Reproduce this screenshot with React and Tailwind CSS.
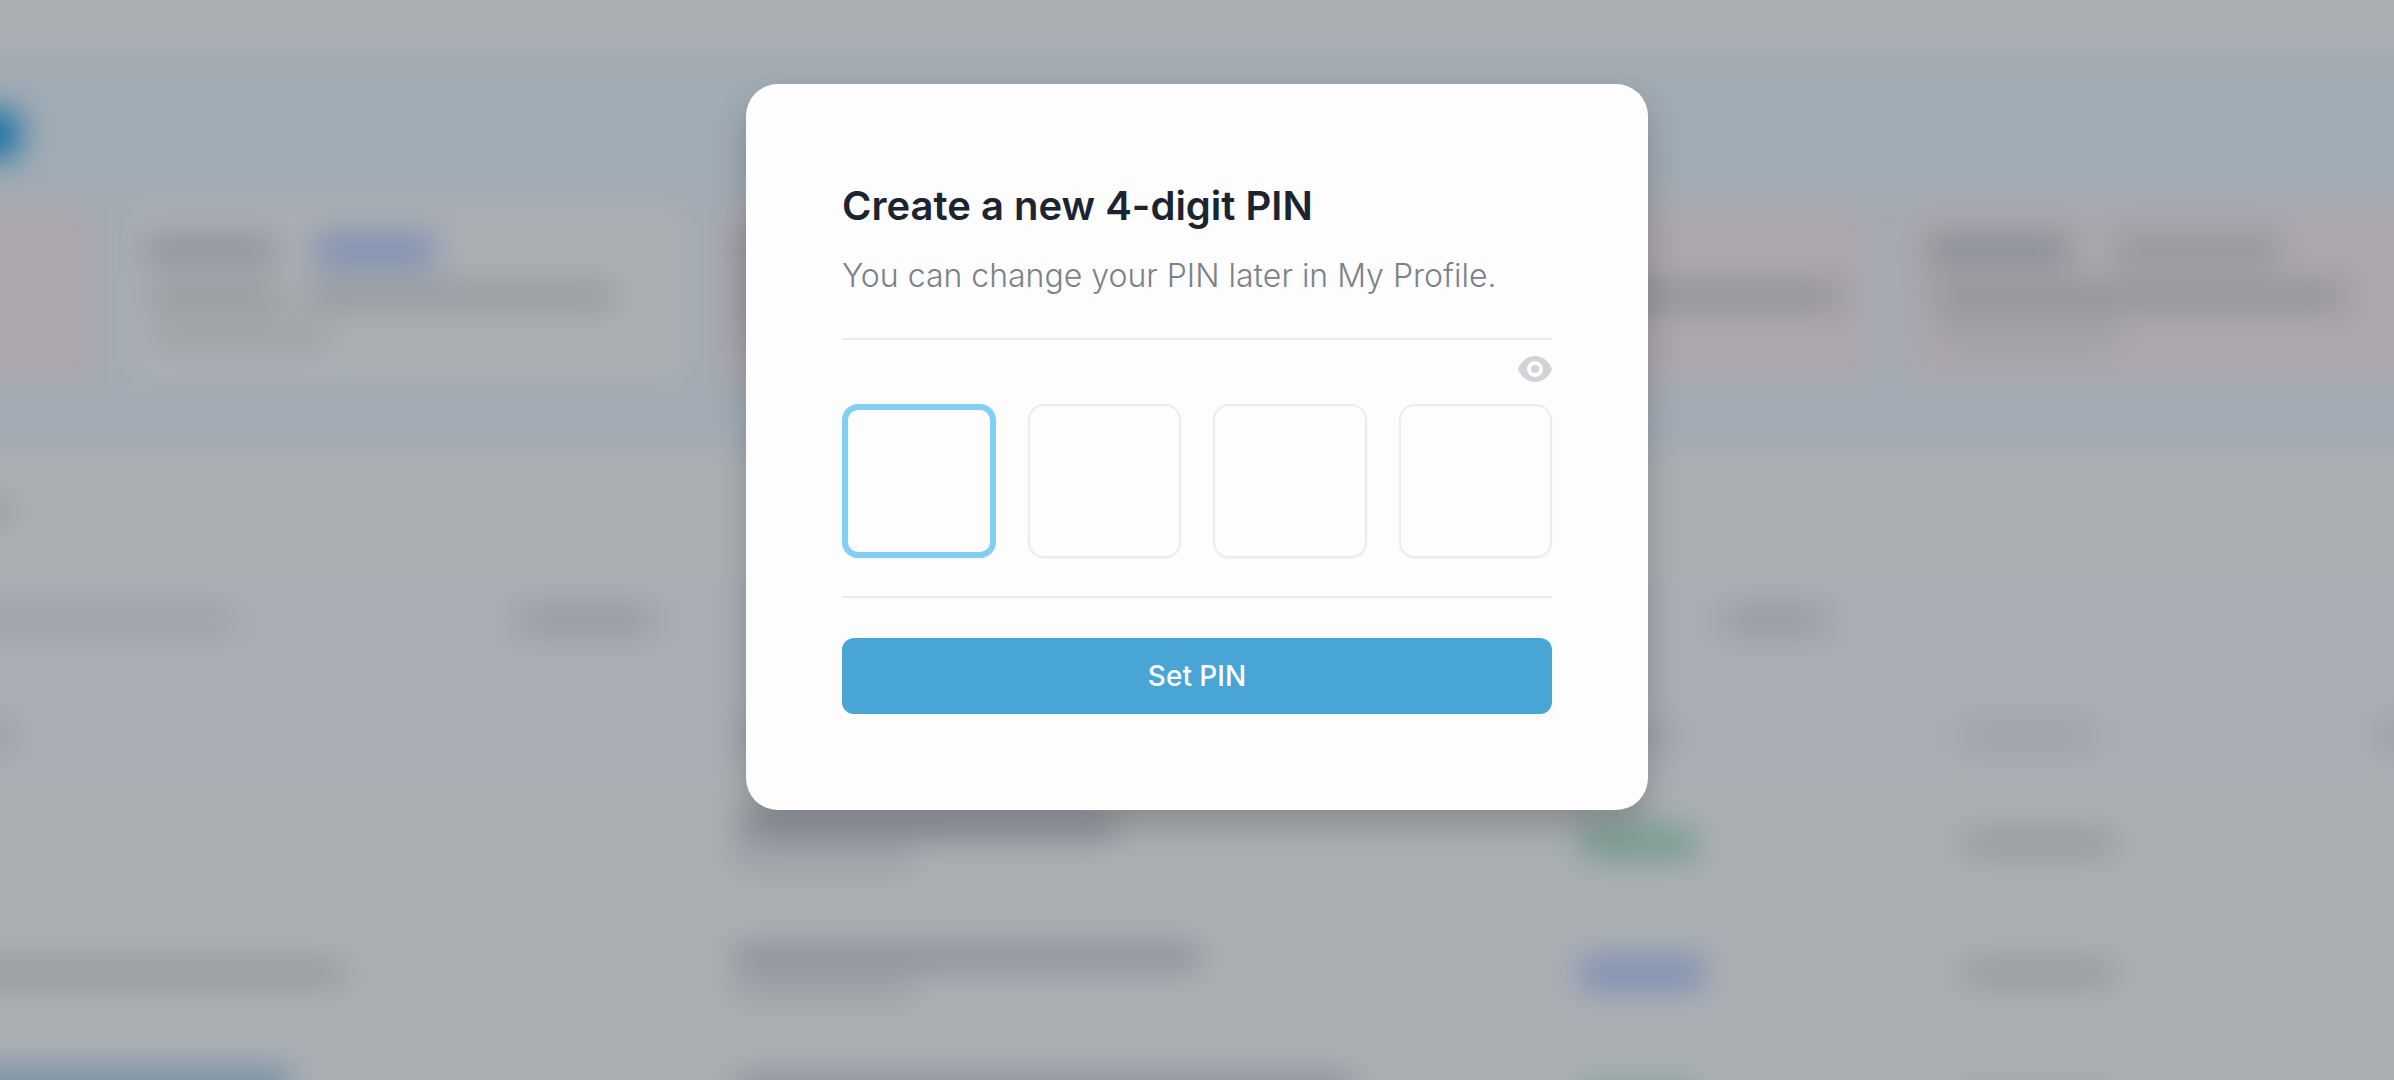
import React, { useRef, useState } from 'react';

const tones = {
    dark: 'bg-[#80878e]',
    mid: 'bg-[#8d9398]',
    soft: 'bg-[#979da2]',
    faint: 'bg-[#9c9ba0]',
    blue: 'bg-[#7d8db3]',
    green: 'bg-[#749a8d]',
    link: 'bg-[#63849f]',
    rose: 'bg-[#8b8a8f]',
};

const Bar = ({ tone = 'mid', size = 'h-5', className = '' }) => (
    <div className={`shrink-0 rounded ${size} ${tones[tone]} ${className}`}></div>
);

const Card = ({ className = '', children }) => (
    <div className={`h-[184px] shrink-0 rounded-xl px-5 pt-8 ${className}`}>{children}</div>
);

const Row = ({ name, title, sub, pill }) => (
    <div className="grid h-[130px] grid-cols-[30%_36%_16%_18%] items-center px-12">
        <div>{name}</div>
        <div className="space-y-3 pl-4">
            <Bar tone="dark" className={title} />
            <Bar tone="soft" className={sub} />
        </div>
        <div>{pill}</div>
        <div><Bar className="w-[150px]" /></div>
    </div>
);

// Dashboard that stays behind the dialog. It runs 48px past the window
// on every side so that the blur has no hard edge.
const Dashboard = () => (
    <div aria-hidden="true" className="absolute -inset-12 overflow-hidden bg-[#aaafb3] pt-12 blur-lg">
        <div className="h-[58px]"></div>
        <div className="h-[388px] bg-[#a1abb4]">
            <div className="h-[144px] pt-[52px]">
                <div className="h-12 w-[68px] rounded-r-xl bg-[#1670a3]"></div>
            </div>
            <div className="flex gap-[27px]">
                <Card className="w-[146px] rounded-l-none bg-[#aba7ad]" />
                <Card className="w-[565px] bg-[#aaafb3]">
                    <div className="flex h-8 items-center gap-10">
                        <Bar tone="dark" className="w-[130px]" />
                        <Bar tone="blue" size="h-8" className="w-[120px]" />
                    </div>
                    <div className="mt-5 flex gap-6 pl-1">
                        <Bar className="w-[132px]" />
                        <Bar className="w-[308px]" />
                    </div>
                    <Bar tone="soft" className="mt-5 ml-2 w-[174px]" />
                </Card>
                <Card className="w-[565px] bg-[#aba7ad]">
                    <div className="flex h-8 items-center">
                        <Bar tone="dark" className="w-[130px]" />
                    </div>
                    <Bar tone="rose" className="mt-5 w-[440px]" />
                    <Bar tone="faint" className="mt-5 w-[174px]" />
                </Card>
                <Card className="w-[565px] bg-[#aba7ad]">
                    <div className="flex h-8 items-center">
                        <Bar tone="dark" className="w-[130px]" />
                    </div>
                    <Bar tone="rose" className="mt-5 w-[510px]" />
                </Card>
                <Card className="w-[600px] bg-[#aba7ad]">
                    <div className="flex h-8 items-center gap-12 pl-2">
                        <Bar tone="dark" size="h-6" className="w-[140px]" />
                        <Bar size="h-6" className="w-[160px]" />
                    </div>
                    <Bar tone="rose" className="mt-5 ml-3 w-[410px]" />
                    <Bar tone="faint" className="mt-4 ml-4 w-[180px]" />
                </Card>
            </div>
        </div>

        <div className="h-[134px] pt-[54px]">
            <Bar className="w-14" />
        </div>
        <div className="flex h-[90px] bg-[#a9aeb4] pt-[30px]">
            <Bar tone="soft" className="w-[278px]" />
            <Bar className="ml-[290px] w-[132px]" />
            <Bar className="ml-[1072px] w-[100px]" />
        </div>
        <div className="grid h-[108px] grid-cols-[30%_36%_16%_18%] items-center bg-[#a9aeb4] px-12 pt-6">
            <Bar className="-ml-12 w-14" />
            <Bar tone="soft" className="ml-4 w-[120px]" />
            <Bar tone="soft" className="w-[96px]" />
            <div className="flex justify-between">
                <Bar tone="soft" className="w-[130px]" />
                <Bar className="-mr-12 w-14" />
            </div>
        </div>
        <Row
            title="w-[380px]"
            sub="w-[180px]"
            pill={<Bar tone="green" size="h-8" className="w-[116px]" />}
        />
        <Row
            name={<Bar className="-ml-12 w-[392px]" />}
            title="w-[464px]"
            sub="w-[180px]"
            pill={<Bar tone="blue" size="h-8" className="w-[124px]" />}
        />
        <Row
            name={<Bar tone="link" size="h-6" className="mb-10 -ml-12 w-[338px]" />}
            title="w-[620px]"
            sub="w-[180px]"
            pill={<Bar tone="green" size="h-8" className="w-[116px]" />}
        />
    </div>
);

const EyeIcon = () => (
    <svg viewBox="0 0 34 28" className="h-7 w-[34px]" fill="none" aria-hidden="true">
        <path
            fill="#d1d3d7"
            fillRule="evenodd"
            d="M17 1C9.300 1 2.700 6.400 0 14c2.700 7.600 9.300 13 17 13s14.300-5.400 17-13C31.300 6.400 24.700 1 17 1Zm0 21a8 8 0 1 1 0-16 8 8 0 0 1 0 16Z"
        />
        <circle cx="17" cy="14" r="4" fill="#d1d3d7" />
    </svg>
);

const App = () => {
    const [pin, setPin] = useState(['', '', '', '']);
    const [visible, setVisible] = useState(false);
    const inputs = useRef([]);

    const handleChange = (index, value) => {
        const digit = value.replace(/\D/g, '').slice(-1);
        setPin(pin.map((d, i) => (i === index ? digit : d)));
        if (digit && index < 3) inputs.current[index + 1].focus();
    };

    const active = pin.findIndex((d) => d === '');

    return (
        <div className="relative min-h-screen overflow-hidden font-['Inter',sans-serif]">
            <Dashboard />

            <div className="relative flex min-h-screen items-start justify-center px-4 py-[84px]">
                <form
                    role="dialog"
                    aria-labelledby="pin-title"
                    onSubmit={(e) => e.preventDefault()}
                    className="w-full max-w-[902px] rounded-[32px] bg-[#fdfdfd] p-24 shadow-[0_16px_32px_rgba(0,0,0,0.2)]"
                >
                    <h1 id="pin-title" className="text-[40px] leading-13 font-semibold text-[#1c2431]">
                        Create a new 4-digit PIN
                    </h1>
                    <p className="mt-5 text-[32px] leading-12 font-light text-[#7b818b]">
                        You can change your PIN later in My Profile.
                    </p>

                    <div className="mt-[38px] border-y-2 border-[#ececed] pb-[38px]">
                        <div className="flex h-16 items-center justify-end pb-1.5">
                            <button
                                type="button"
                                aria-label={visible ? 'Hide PIN' : 'Show PIN'}
                                onClick={() => setVisible(!visible)}
                                className="cursor-pointer"
                            >
                                <EyeIcon />
                            </button>
                        </div>
                        <div className="grid grid-cols-4 gap-8">
                            {pin.map((digit, i) => (
                                <input
                                    key={i}
                                    ref={(el) => { inputs.current[i] = el; }}
                                    type={visible ? 'text' : 'password'}
                                    inputMode="numeric"
                                    aria-label={`PIN digit ${i + 1}`}
                                    value={digit}
                                    onChange={(e) => handleChange(i, e.target.value)}
                                    className={`aspect-square w-full rounded-2xl text-center text-[40px] text-[#1c2431] shadow-xs outline-none ${
                                        i === active ? 'border-6 border-[#82cff5]' : 'border-2 border-[#ececed]'
                                    }`}
                                />
                            ))}
                        </div>
                    </div>

                    <button
                        type="submit"
                        className="mt-10 w-full cursor-pointer rounded-xl bg-[#4aa5d7] py-5 text-[28px] leading-9 font-medium text-white"
                    >
                        Set PIN
                    </button>
                </form>
            </div>
        </div>
    );
};

export default App;
